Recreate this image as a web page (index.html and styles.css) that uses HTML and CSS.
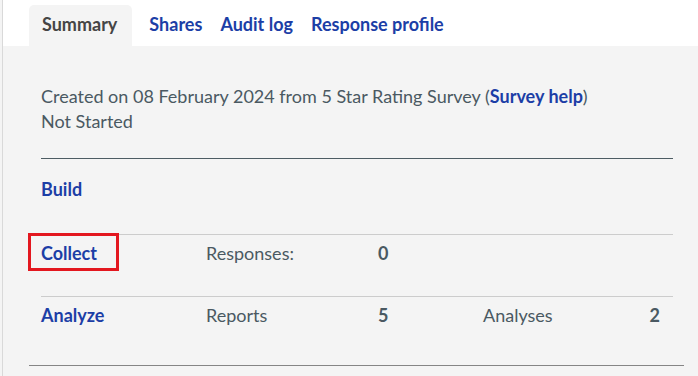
FILE: index.html
```html
<!DOCTYPE html>
<html lang="en">
<head>
  <meta charset="UTF-8" />
  <meta name="viewport" content="width=device-width, initial-scale=1.0"/>
  <title>Survey Summary</title>
  <link rel="stylesheet" href="styles.css">
</head>
<body>
  <div class="page">
    <div class="tabs">
      <a class="tab active">Summary</a>
      <a class="tab">Shares</a>
      <a class="tab">Audit log</a>
      <a class="tab">Response profile</a>
    </div>

    <div class="panel">
      <div class="info">
        <p>Created on 08 February 2024 from 5 Star Rating Survey (<a class="link">Survey help</a>)</p>
        <p>Not Started</p>
      </div>

      <div class="stages">
        <div class="stage build">
          <a class="link">Build</a>
        </div>
        <div class="stage">
          <a class="link marked">Collect</a>
          <span>Responses:</span>
          <strong>0</strong>
        </div>
        <div class="stage">
          <a class="link">Analyze</a>
          <span>Reports</span>
          <strong>5</strong>
          <span>Analyses</span>
          <strong class="end">2</strong>
        </div>
      </div>
    </div>
  </div>
</body>
</html>
```

FILE: styles.css
```css
body {
  margin: 0;
  padding-left: 2px;
  font-family: Lato, "Open Sans", sans-serif;
  font-size: 18px;
  color: #4a5962;
  background: #f4f4f4;
}
.page {
  border-left: 1px solid #d9d9d9;
  min-height: 376px;
}
.tabs {
  display: flex;
  align-items: flex-end;
  height: 46px;
  padding-left: 26px;
  background: #fff;
}
.tab {
  font-weight: bold;
  color: #1c3ea6;
  padding: 0 9px 3px;
  line-height: 38px;
  cursor: pointer;
}
.tab.active {
  color: #454545;
  background: #f4f4f4;
  border-radius: 5px 5px 0 0;
  padding-left: 13px;
  padding-right: 15px;
  margin-right: 8px;
}
.panel {
  padding: 38px 0 0 26px;
  width: 655px;
}
.info {
  margin: 0 11px 24px 12px;
}
.info p {
  margin: 0;
  line-height: 25px;
}
.link {
  color: #1c3ea6;
  font-weight: bold;
  cursor: pointer;
}
.stages {
  border-bottom: 1px solid #858585;
  padding: 0 11px 7px 12px;
}
.stage {
  display: grid;
  grid-template-columns: 165px 172px 105px 1fr auto;
  align-items: center;
  line-height: 24px;
  padding: 6px 13px 31px 0;
  border-top: 1px solid #cccccc;
}
.stage.build {
  border-top-color: #4d5c63;
  padding-top: 18px;
  padding-bottom: 33px;
}
.stage strong {
  color: #4a5962;
}
.stage .end {
  text-align: right;
}
.marked {
  position: relative;
  justify-self: start;
}
.marked::after {
  content: "";
  position: absolute;
  left: -13px;
  right: -22px;
  top: -8px;
  bottom: -6px;
  border: 3px solid #e3171f;
}
```
